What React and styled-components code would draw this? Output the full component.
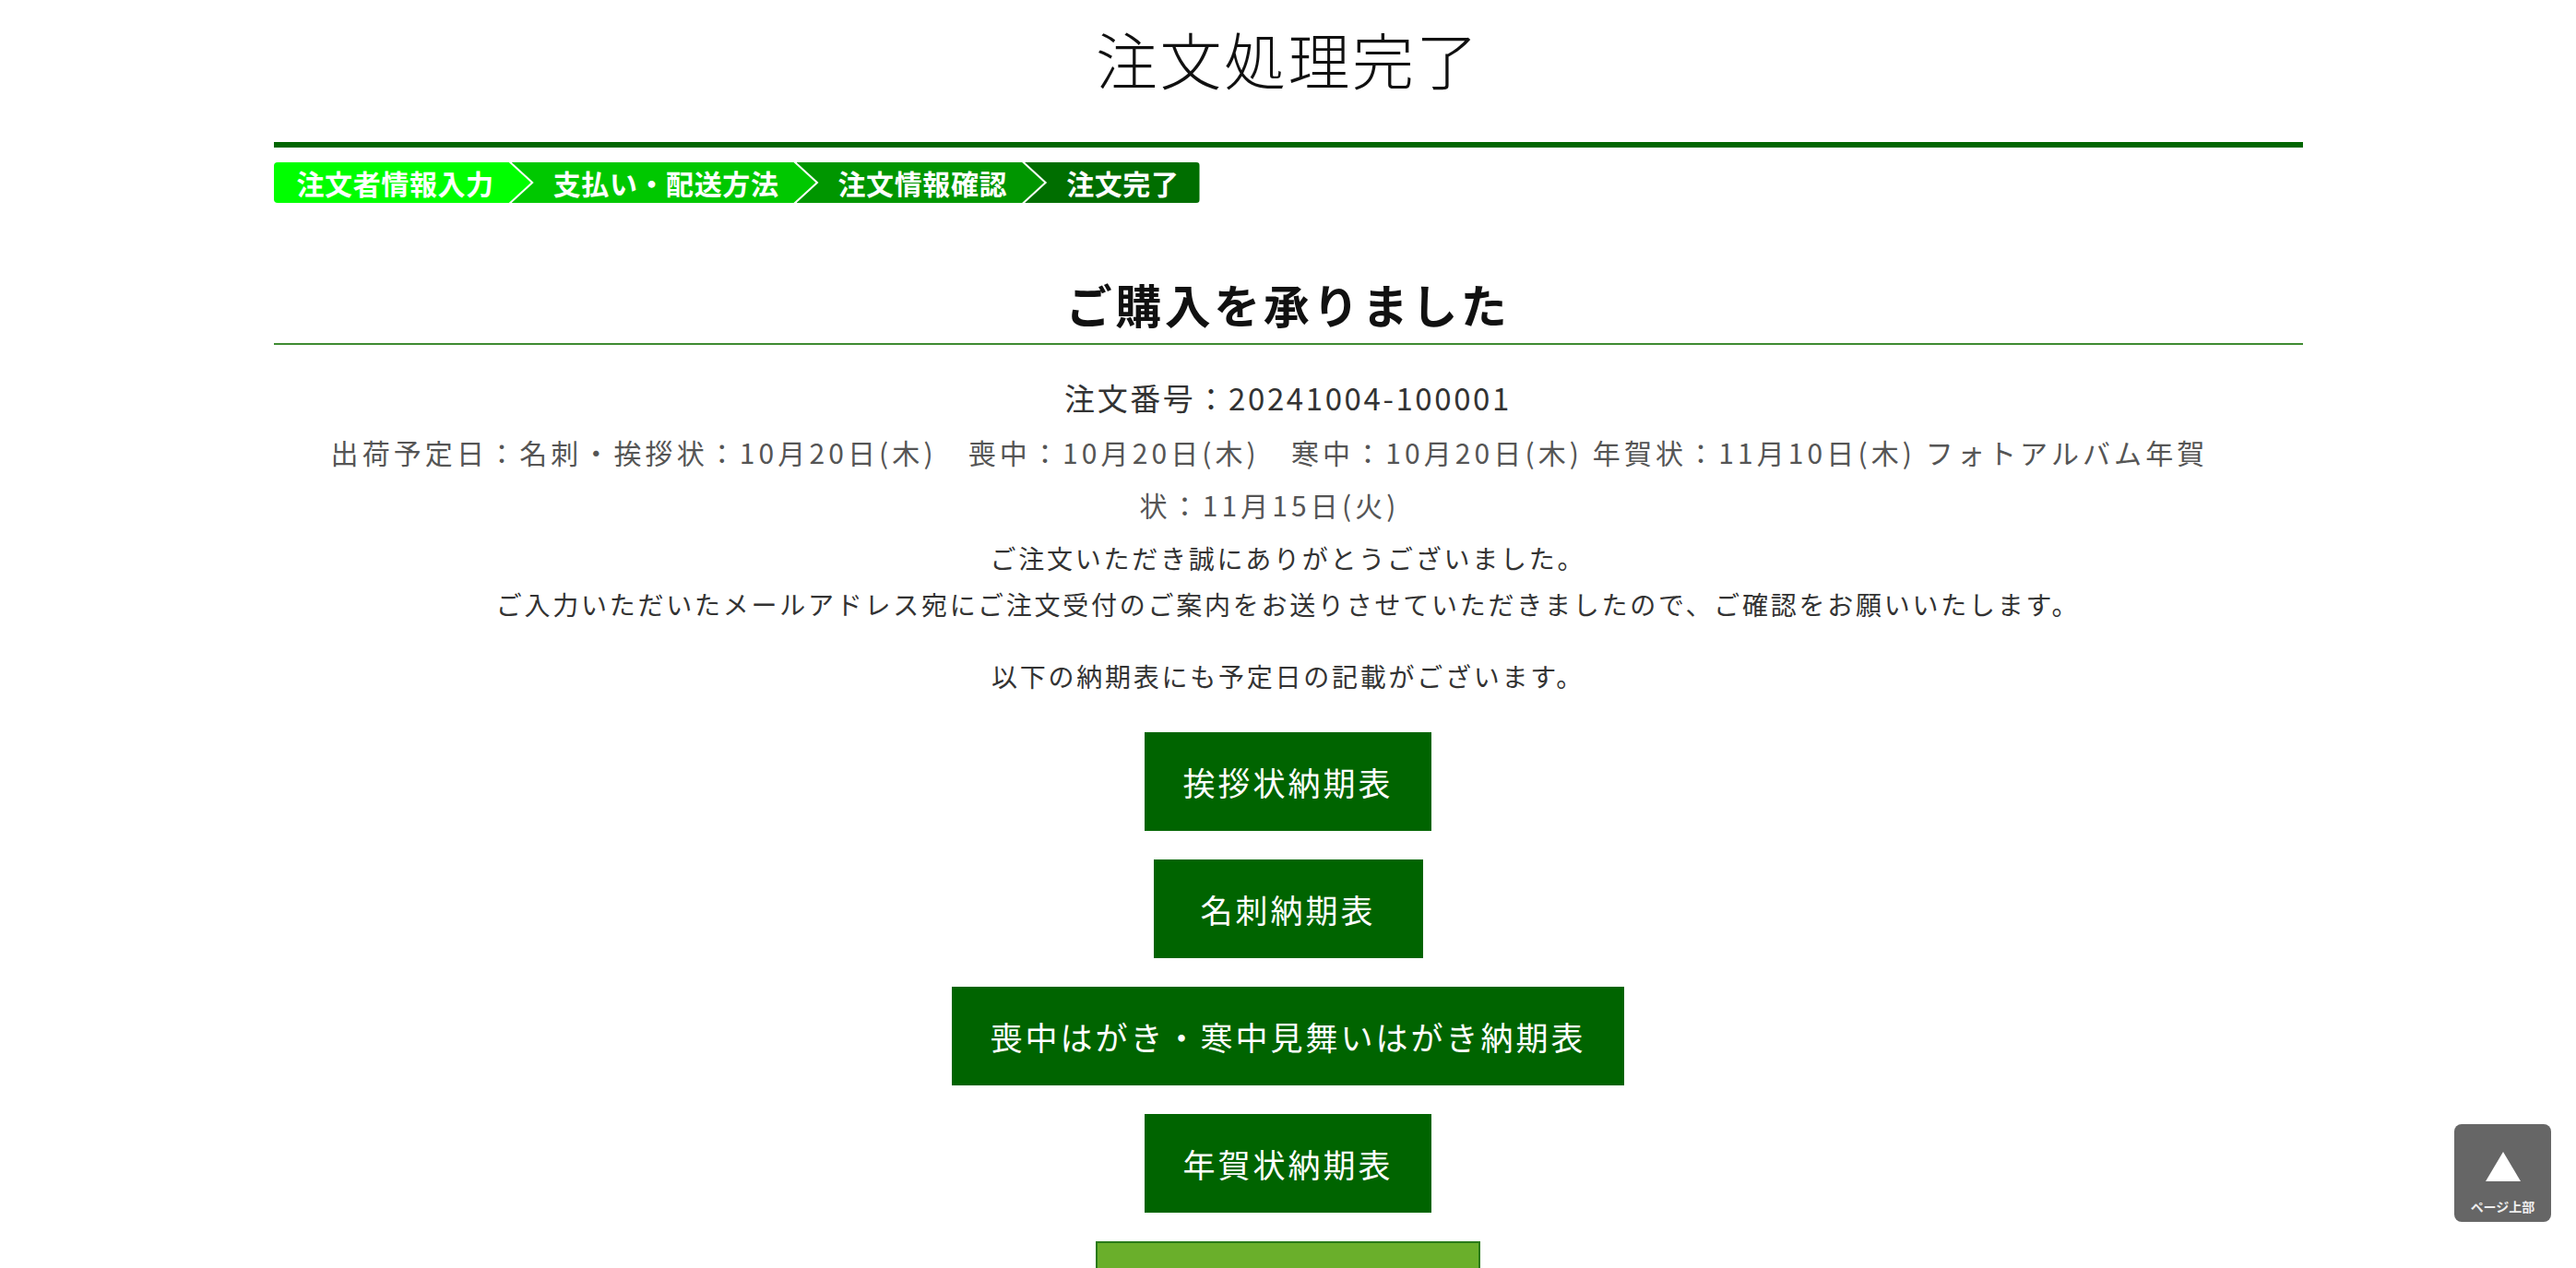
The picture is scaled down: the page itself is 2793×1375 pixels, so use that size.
import React from 'react'
import styled, { createGlobalStyle } from 'styled-components';

const GlobalStyle = createGlobalStyle`
  body {
    margin: 0;
    background: #fff;
    font-family: "Noto Sans CJK JP", "Noto Sans", sans-serif;
    color: #333;
  }
`;

const steps = ['注文者情報入力', '支払い・配送方法', '注文情報確認', '注文完了'];
const stepColors = ['#00ff00', '#00c800', '#009600', '#006e00'];

const tables = [
  { label: '挨拶状納期表' },
  { label: '名刺納期表' },
  { label: '喪中はがき・寒中見舞いはがき納期表' },
  { label: '年賀状納期表' },
  { label: 'マイページ(会員用)', light: true },
];

function App() {
  return (
    <>
      <GlobalStyle />
      <Page>
        <Title>注文処理完了</Title>

        <Steps>
          {steps.map((s, i) => (
            <Step key={s} index={i} last={i === steps.length - 1} color={stepColors[i]}>
              {s}
            </Step>
          ))}
        </Steps>

        <Heading>ご購入を承りました</Heading>

        <OrderNo>注文番号：20241004-100001</OrderNo>
        <Shipping>
          出荷予定日：名刺・挨拶状：10月20日(木)　喪中：10月20日(木)　寒中：10月20日(木) 年賀状：11月10日(木) フォトアルバム年賀
          <br />
          状：11月15日(火)
        </Shipping>

        <Message>
          ご注文いただき誠にありがとうございました。
          <br />
          ご入力いただいたメールアドレス宛にご注文受付のご案内をお送りさせていただきましたので、ご確認をお願いいたします。
        </Message>
        <Notice>以下の納期表にも予定日の記載がございます。</Notice>

        <ButtonList>
          {tables.map(t => (
            <TableButton key={t.label} light={t.light}>{t.label}</TableButton>
          ))}
        </ButtonList>
      </Page>

      <PageTop>
        <Arrow />
        <span>ページ上部</span>
      </PageTop>
    </>
  )
}

const Page = styled.div`
  width: 2200px;
  margin: 0 auto;
  text-align: center;
  padding-bottom: 200px;
`;

const Title = styled.h1`
  margin: 0;
  font-size: 67px;
  letter-spacing: 2.5px;
  font-weight: 300;
  color: #111;
  line-height: 126px;
  padding-bottom: 28px;
  border-bottom: 6px solid #006600;
`;

const Steps = styled.div`
  display: flex;
  margin-top: 16px;
  height: 44px;
`;

const Step = styled.div`
  background: ${p => p.color};
  color: #fff;
  font-weight: 700;
  font-size: 30px;
  letter-spacing: 0.6px;
  line-height: 44px;
  white-space: nowrap;
  padding: ${p => (p.last ? '0 22px 0 45px' : p.index === 0 ? '0 40px 0 25px' : '0 40px 0 45px')};
  margin-left: ${p => (p.index === 0 ? '0' : '-21px')};
  border-radius: ${p => (p.index === 0 ? '4px 0 0 4px' : p.last ? '0 4px 4px 0' : '0')};
  clip-path: ${p =>
    p.last
      ? 'polygon(0 0, 100% 0, 100% 100%, 0 100%, 24px 50%)'
      : p.index === 0
      ? 'polygon(0 0, calc(100% - 24px) 0, 100% 50%, calc(100% - 24px) 100%, 0 100%)'
      : 'polygon(0 0, calc(100% - 24px) 0, 100% 50%, calc(100% - 24px) 100%, 0 100%, 24px 50%)'};
`;

const Heading = styled.h2`
  margin: 69px 0 0;
  font-size: 50px;
  letter-spacing: 3.5px;
  font-weight: 700;
  color: #111;
  line-height: 80px;
  padding-bottom: 3px;
  border-bottom: 2px solid #3f8b32;
`;

const OrderNo = styled.p`
  margin: 32px 0 0;
  font-size: 33px;
  letter-spacing: 2.6px;
  line-height: 50px;
  color: #333;
`;

const Shipping = styled.p`
  margin: 6px 0 0;
  padding-right: 40px;
  font-size: 30px;
  letter-spacing: 4.1px;
  line-height: 57px;
  color: #555;
`;

const Message = styled.p`
  margin: 4px 0 0;
  font-size: 28px;
  letter-spacing: 2.75px;
  line-height: 50px;
  color: #333;
`;

const Notice = styled(Message)`
  margin-top: 28px;
`;

const ButtonList = styled.div`
  display: flex;
  flex-direction: column;
  align-items: center;
  gap: 31px;
  margin-top: 36px;
`;

const TableButton = styled.a`
  display: block;
  box-sizing: border-box;
  min-width: 292px;
  padding: 25px 40px;
  font-size: 35px;
  letter-spacing: 3px;
  line-height: 55px;
  color: #fff;
  text-decoration: none;
  background: ${p => (p.light ? '#6aaf2b' : '#006400')};
  border: ${p => (p.light ? '2px solid #2a7a1a' : '1px solid #006400')};
  cursor: pointer;
`;

const PageTop = styled.div`
  position: fixed;
  right: 27px;
  bottom: 50px;
  width: 105px;
  height: 106px;
  border-radius: 8px;
  background: #666;
  display: flex;
  flex-direction: column;
  align-items: center;
  justify-content: flex-end;
  padding-bottom: 8px;
  box-sizing: border-box;
  gap: 18px;

  span {
    color: #eee;
    font-size: 14px;
    font-weight: 700;
    line-height: 18px;
  }
`;

const Arrow = styled.div`
  width: 0;
  height: 0;
  border-left: 19px solid transparent;
  border-right: 19px solid transparent;
  border-bottom: 32px solid #fff;
`;

export default App
